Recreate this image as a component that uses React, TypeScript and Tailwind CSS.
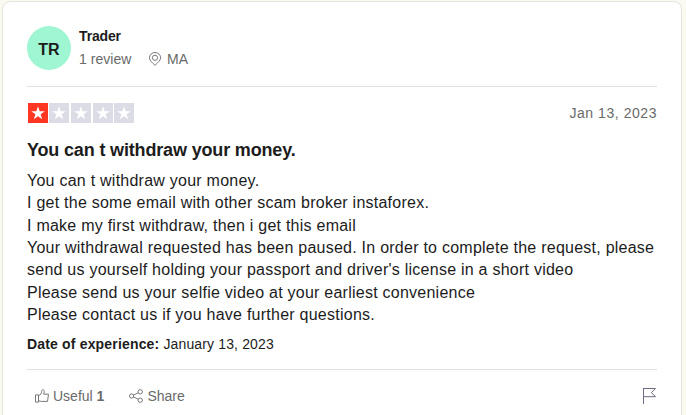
const reviewLines = [
  "You can t withdraw your money.",
  "I get the some email with other scam broker instaforex.",
  "I make my first withdraw, then i get this email",
  "Your withdrawal requested has been paused. In order to complete the request, please",
  "send us yourself holding your passport and driver's license in a short video",
  "Please send us your selfie video at your earliest convenience",
  "Please contact us if you have further questions.",
];

function Star({ filled }: { filled: boolean }) {
  return (
    <svg
      viewBox="0 0 20 20"
      className={`h-5 w-5 ${filled ? "bg-[#ff3722]" : "bg-[#dcdce6]"}`}
    >
      <path
        fill="#fff"
        d="M10 3.2l1.65 4.95h5.15l-4.15 3.05 1.55 5L10 13.2l-4.2 3 1.6-5-4.2-3.05h5.15z"
      />
    </svg>
  );
}

function PinIcon() {
  return (
    <svg viewBox="0 0 14 14" fill="none" stroke="#696a6a" strokeWidth="0.9" className="h-3.5 w-3.5">
      <path d="M7 13.4C4.6 10.9 1.4 8.6 1.4 5.8a5.6 5.3 0 0 1 11.2 0C12.6 8.6 9.4 10.9 7 13.4z" />
      <circle cx="7" cy="5.8" r="2.6" />
    </svg>
  );
}

function ThumbIcon() {
  return (
    <svg viewBox="0 0 14 14" fill="none" stroke="#696a6a" strokeWidth="0.9" className="h-3.5 w-3.5">
      <path d="M.5 5.9h3v7.2h-3z" />
      <path d="M3.5 6.9C5.6 5.9 6.6 4.4 6.6 2.3c0-2.4 2.6-2.2 2.6.3 0 1-.2 1.7-.5 2.6h4.8l-1 7.2H6.2l-2.7-.6" />
    </svg>
  );
}

function ShareIcon() {
  return (
    <svg viewBox="0 0 14 14" fill="none" stroke="#696a6a" strokeWidth="0.9" className="h-3.5 w-3.5">
      <circle cx="2.6" cy="7" r="2.1" />
      <circle cx="11.2" cy="2.8" r="2.2" />
      <circle cx="11.2" cy="11.2" r="2.2" />
      <path d="M4.5 6.1l4.7-2.3M4.5 7.9l4.7 2.3" />
    </svg>
  );
}

function FlagIcon() {
  return (
    <svg viewBox="0 0 14 16" fill="none" className="h-4 w-3.5">
      <path stroke="#6c6c85" d="M.5 0v16" />
      <path stroke="#6c6c85" d="M1 .5h11.5L8.3 4.7l4.2 4H1" />
    </svg>
  );
}

export default function App() {
  return (
    <div className="h-[415px] overflow-hidden bg-[#fbfaf1] pt-px pl-0.5 font-['Liberation_Sans',Arial,sans-serif] text-[#1c1c1c]">
      <article className="h-[440px] w-[680px] rounded-lg border border-[#e5e5dd] bg-white px-6 pt-6">
        <header className="flex h-[61px] gap-2 border-b border-[#e1e1e1]">
          <div className="flex h-11 w-11 items-center justify-center rounded-full bg-[#9ff6d3] pt-1 text-base font-bold">
            TR
          </div>
          <div>
            <div className="text-sm leading-5 font-bold tracking-[-0.15px]">Trader</div>
            <div className="mt-[3px] flex items-center text-sm leading-5 text-[#696a6a]">
              <span className="w-[69px] tracking-[0.05px]">1 review</span>
              <PinIcon />
              <span className="ml-[5px]">MA</span>
            </div>
          </div>
        </header>

        <div className="mt-4 flex h-5 items-center justify-between">
          <div className="flex gap-[1.7px] pl-[0.7px]">
            {[1, 2, 3, 4, 5].map((n) => (
              <Star key={n} filled={n === 1} />
            ))}
          </div>
          <time className="text-sm tracking-[0.55px] text-[#696a6a]">Jan 13, 2023</time>
        </div>

        <h2 className="mt-[15px] text-lg leading-6 font-bold tracking-[-0.16px]">
          You can t withdraw your money.
        </h2>
        <div className="mt-2 text-base leading-[22.35px] tracking-[0.245px] whitespace-nowrap">
          {reviewLines.map((line) => (
            <p key={line}>{line}</p>
          ))}
        </div>

        <p className="mt-2 text-sm leading-5 tracking-[0.14px]">
          <b className="tracking-[0.17px]">Date of experience:</b> January 13, 2023
        </p>

        <footer className="mt-[15px] flex items-center border-t border-[#e1e1e1] pt-4 pl-2 text-sm leading-5 text-[#696a6a]">
          <button className="flex items-center gap-1">
            <ThumbIcon />
            <span>
              Useful <b>1</b>
            </span>
          </button>
          <button className="ml-[25px] flex items-center gap-1">
            <ShareIcon />
            Share
          </button>
          <button className="ml-auto">
            <FlagIcon />
          </button>
        </footer>
      </article>
    </div>
  );
}
